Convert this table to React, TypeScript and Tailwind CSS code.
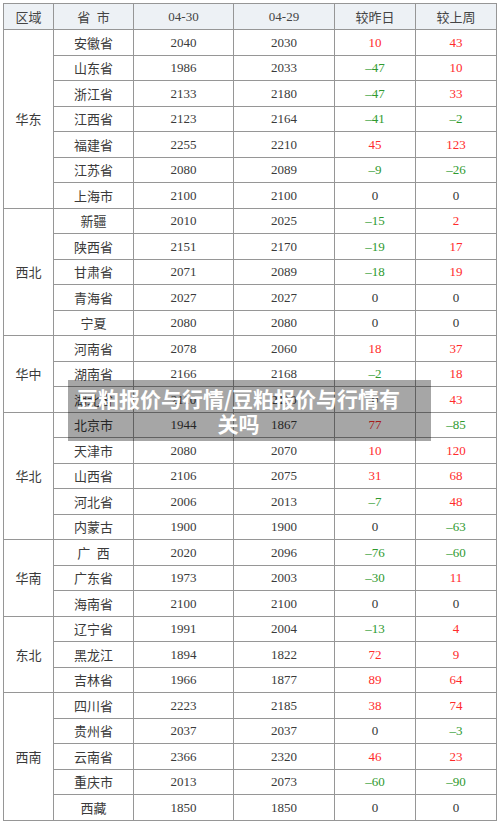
import React from "react";

type Row = [string, string, string, string, string];
type Region = { name: string; rows: Row[] };

const data: Region[] = [
  {
    name: "华东",
    rows: [
      ["安徽省", "2040", "2030", "10", "43"],
      ["山东省", "1986", "2033", "-47", "10"],
      ["浙江省", "2133", "2180", "-47", "33"],
      ["江西省", "2123", "2164", "-41", "-2"],
      ["福建省", "2255", "2210", "45", "123"],
      ["江苏省", "2080", "2089", "-9", "-26"],
      ["上海市", "2100", "2100", "0", "0"],
    ],
  },
  {
    name: "西北",
    rows: [
      ["新疆", "2010", "2025", "-15", "2"],
      ["陕西省", "2151", "2170", "-19", "17"],
      ["甘肃省", "2071", "2089", "-18", "19"],
      ["青海省", "2027", "2027", "0", "0"],
      ["宁夏", "2080", "2080", "0", "0"],
    ],
  },
  {
    name: "华中",
    rows: [
      ["河南省", "2078", "2060", "18", "37"],
      ["湖南省", "2166", "2168", "-2", "18"],
      ["湖北省", "2110", "2110", "0", "43"],
    ],
  },
  {
    name: "华北",
    rows: [
      ["北京市", "1944", "1867", "77", "-85"],
      ["天津市", "2080", "2070", "10", "120"],
      ["山西省", "2106", "2075", "31", "68"],
      ["河北省", "2006", "2013", "-7", "48"],
      ["内蒙古", "1900", "1900", "0", "-63"],
    ],
  },
  {
    name: "华南",
    rows: [
      ["广\u2002西", "2020", "2096", "-76", "-60"],
      ["广东省", "1973", "2003", "-30", "11"],
      ["海南省", "2100", "2100", "0", "0"],
    ],
  },
  {
    name: "东北",
    rows: [
      ["辽宁省", "1991", "2004", "-13", "4"],
      ["黑龙江", "1894", "1822", "72", "9"],
      ["吉林省", "1966", "1877", "89", "64"],
    ],
  },
  {
    name: "西南",
    rows: [
      ["四川省", "2223", "2185", "38", "74"],
      ["贵州省", "2037", "2037", "0", "-3"],
      ["云南省", "2366", "2320", "46", "23"],
      ["重庆市", "2013", "2073", "-60", "-90"],
      ["西藏", "1850", "1850", "0", "0"],
    ],
  },
];

const cell =
  "border-r border-b border-[#969696] flex items-center justify-center text-[13px] leading-none";
const cjk = "font-['Noto_Sans_CJK_SC',sans-serif]";
const num = "font-['Liberation_Serif','Noto_Sans_CJK_SC',serif] text-[13.5px]";
const dark = "text-[#3a3a3a]";

function colorFor(v: string) {
  if (v === "0") return "text-[#333333]";
  if (v.startsWith("-")) return "text-[#2f9a2f]";
  return "text-[#ff2b2b]";
}

function show(v: string) {
  return v.startsWith("-") ? "\u2013" + v.slice(1) : v;
}

const spans = [
  "row-span-7",
  "row-span-5",
  "row-span-3",
  "row-span-5",
  "row-span-3",
  "row-span-3",
  "row-span-5",
];

export default function App() {
  return (
    <div className="relative w-[500px] h-[824px] bg-white pt-[3px] pl-[3px]">
      <div className="grid grid-cols-[50px_80px_100px_101px_81px_81px] grid-rows-[26px_repeat(31,25.5px)] border-l border-t border-[#969696] w-[494px]">
        <div className={`${cell} ${cjk} bg-[#edf1f5] text-[#444444]`}>区域</div>
        <div className={`${cell} ${cjk} bg-[#edf1f5] text-[#444444]`}>省&ensp;市</div>
        <div className={`${cell} ${num} bg-[#edf1f5] text-[#444444]`}>04-30</div>
        <div className={`${cell} ${num} bg-[#edf1f5] text-[#444444]`}>04-29</div>
        <div className={`${cell} ${cjk} bg-[#edf1f5] text-[#444444]`}>较昨日</div>
        <div className={`${cell} ${cjk} bg-[#edf1f5] text-[#444444]`}>较上周</div>
        {data.map((region, ri) => (
          <React.Fragment key={region.name}>
            {region.rows.map((r, i) => (
              <React.Fragment key={r[0]}>
                {i === 0 && (
                  <div className={`${cell} ${cjk} ${dark} ${spans[ri]}`}>{region.name}</div>
                )}
                <div className={`${cell} ${cjk} ${dark}`}>{r[0]}</div>
                <div className={`${cell} ${num} ${dark}`}>{r[1]}</div>
                <div className={`${cell} ${num} ${dark}`}>{r[2]}</div>
                <div className={`${cell} ${num} ${colorFor(r[3])}`}>{show(r[3])}</div>
                <div className={`${cell} ${num} ${colorFor(r[4])}`}>{show(r[4])}</div>
              </React.Fragment>
            ))}
          </React.Fragment>
        ))}
      </div>
      <div className="absolute left-[68px] top-[380px] w-[363px] h-[61px] bg-black/35 flex items-center justify-center pl-[4px] pr-[26px]">
        <div className={`${cjk} text-white font-bold text-[21px] leading-[25px] text-center`}>
          豆粕报价与行情/豆粕报价与行情有关吗
        </div>
      </div>
    </div>
  );
}
